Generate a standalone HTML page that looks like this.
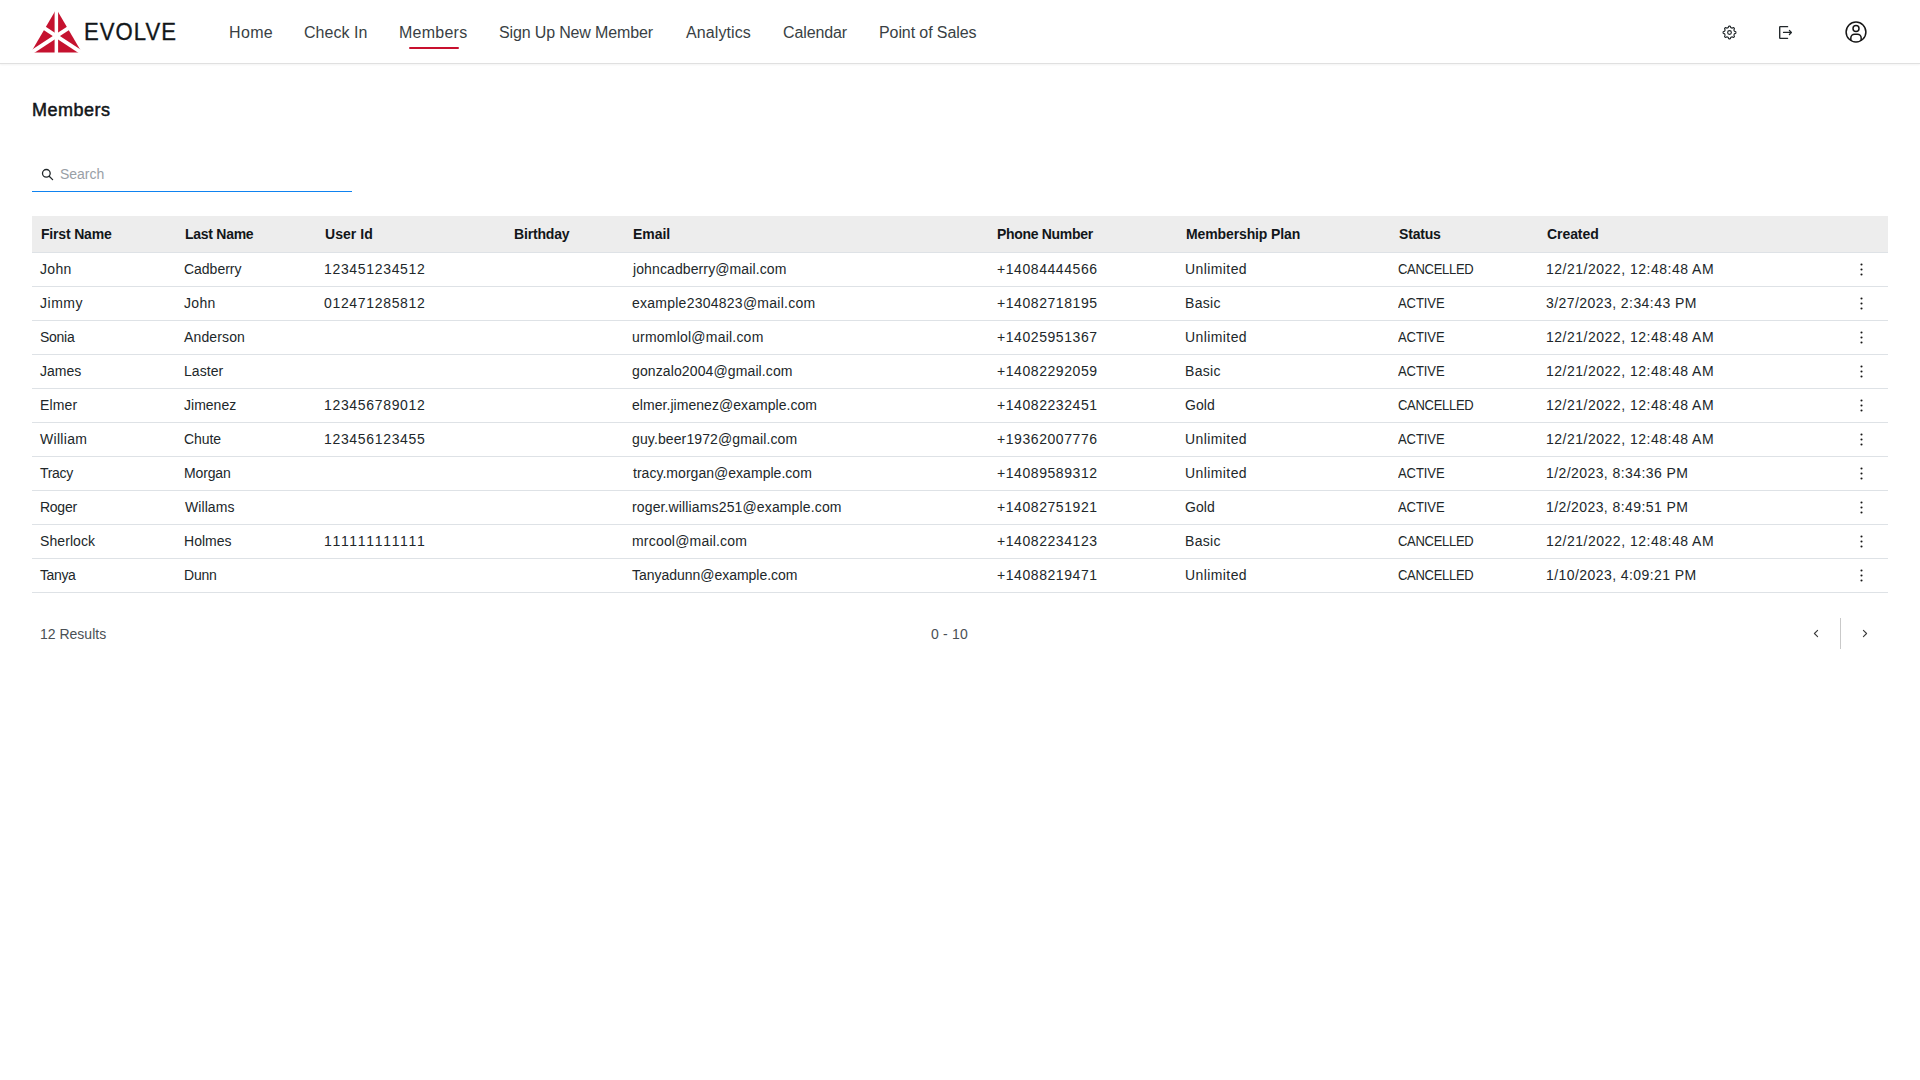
<!DOCTYPE html>
<html lang="en">
<head>
<meta charset="utf-8">
<title>Evolve - Members</title>
<style>
*{box-sizing:border-box;margin:0;padding:0}
html,body{width:1920px;height:1080px;background:#fff;overflow:hidden}
body{font-family:"Liberation Sans",sans-serif;color:#21272a;font-size:14px}
span{display:inline-block;white-space:nowrap}
.nav{position:absolute;left:0;top:0;width:1920px;height:64px;background:#fff;border-bottom:1px solid #e0e0e0;box-shadow:0 1px 2px rgba(0,0,0,.05)}
.logo{position:absolute;left:28px;top:6px;width:60px;height:50px}
.brand{position:absolute;left:84px;top:17px;font-size:24px;line-height:30px;color:#121619;font-weight:400}
.brand span{transform:scaleX(.92);transform-origin:0 50%;-webkit-text-stroke:.35px #121619}
.links a{position:absolute;top:21px;display:block;line-height:24px;font-size:16px;color:#393f44;text-decoration:none;white-space:nowrap}
.links i{position:absolute;left:409px;width:50px;top:47px;height:2px;background:#c8102e;border-radius:1px}
.ico{position:absolute;overflow:visible}
h1{position:absolute;left:32px;top:98px;font-size:18px;line-height:24px;font-weight:400;color:#121619;-webkit-text-stroke:.5px #121619}
.search{position:absolute;left:32px;top:158px;width:320px;height:34px;border-bottom:1px solid #0f83f0}
.search .ph{position:absolute;left:28px;top:6px;line-height:20px;color:#99a0a6;font-size:14px}
table{position:absolute;left:32px;top:216px;width:1856px;border-collapse:collapse;table-layout:fixed}
th{height:36px;background:#ededed;text-align:left;font-weight:700;padding:0 0 0 9px;color:#121619;font-size:14px;white-space:nowrap;border-bottom:1px solid #dee2e6}
td{height:34px;border-bottom:1px solid #dee2e6;padding:0 0 0 8px;color:#21272a;font-size:14px;white-space:nowrap;line-height:20px}
th span,td span{vertical-align:middle}
td span{position:relative;top:-1px}
.n{font-kerning:none}
.u{transform:scaleX(.93);transform-origin:0 50%}
.kb{position:absolute;left:1859px;width:5px;height:15px}
.pg{position:absolute;left:32px;top:618px;width:1856px;height:32px;font-size:14px;color:#4a5055}
.pg .l{position:absolute;left:8px;top:6px;line-height:20px}
.pg .c{position:absolute;left:899px;top:6px;line-height:20px}
.pg .d{position:absolute;left:1808px;top:0;width:1px;height:31px;background:#c9c9c9}
</style>
</head>
<body>
<div class="nav">
<svg class="logo" viewBox="28 6 60 50"><polygon points="56.35,9 30.85,52.6 81.85,52.6" fill="#c5122f"/><g stroke="#fff" fill="none"><path d="M56.35 6V56" stroke-width="3.5"/><path d="M27.2 55.2L73 25.07" stroke-width="3.9"/><path d="M85.5 55.2L39.7 25.07" stroke-width="3.9"/></g></svg>
<div class="brand"><span style="letter-spacing:1.139px;">EVOLVE</span></div>
<div class="links"><a style="left:229px"><span style="letter-spacing:0.336px;">Home</span></a><a style="left:304px"><span style="letter-spacing:0.051px;">Check In</span></a><a style="left:399px"><span style="letter-spacing:0.245px;">Members</span></a><a style="left:499px"><span style="letter-spacing:-0.146px;">Sign Up New Member</span></a><a style="left:685px"><span style="letter-spacing:0.089px;margin-left:1.000px;">Analytics</span></a><a style="left:782px"><span style="letter-spacing:-0.110px;margin-left:1.000px;">Calendar</span></a><a style="left:879px"><span style="letter-spacing:-0.094px;">Point of Sales</span></a><i></i></div>
<svg class="ico" style="left:1721px;top:24px" width="16" height="16" viewBox="1721 24 16 16" fill="none" stroke="#21272a" stroke-width="1.15" stroke-linejoin="round"><path d="M1729.50 26.11 L1729.71 26.12 L1729.92 26.14 L1730.12 26.21 L1730.31 26.35 L1730.47 26.64 L1730.58 27.06 L1730.69 27.41 L1730.81 27.59 L1730.96 27.69 L1731.11 27.76 L1731.26 27.82 L1731.41 27.89 L1731.56 27.95 L1731.71 28.01 L1731.87 28.07 L1732.04 28.10 L1732.26 28.06 L1732.58 27.89 L1732.96 27.67 L1733.28 27.58 L1733.51 27.61 L1733.70 27.71 L1733.87 27.84 L1734.02 27.98 L1734.16 28.13 L1734.29 28.30 L1734.39 28.49 L1734.42 28.72 L1734.33 29.04 L1734.11 29.42 L1733.94 29.74 L1733.90 29.96 L1733.93 30.13 L1733.99 30.29 L1734.05 30.44 L1734.11 30.59 L1734.18 30.74 L1734.24 30.89 L1734.31 31.04 L1734.41 31.19 L1734.59 31.31 L1734.94 31.42 L1735.36 31.53 L1735.65 31.69 L1735.79 31.88 L1735.86 32.08 L1735.88 32.29 L1735.89 32.50 L1735.88 32.71 L1735.86 32.92 L1735.79 33.12 L1735.65 33.31 L1735.36 33.47 L1734.94 33.58 L1734.59 33.69 L1734.41 33.81 L1734.31 33.96 L1734.24 34.11 L1734.18 34.26 L1734.11 34.41 L1734.05 34.56 L1733.99 34.71 L1733.93 34.87 L1733.90 35.04 L1733.94 35.26 L1734.11 35.58 L1734.33 35.96 L1734.42 36.28 L1734.39 36.51 L1734.29 36.70 L1734.16 36.87 L1734.02 37.02 L1733.87 37.16 L1733.70 37.29 L1733.51 37.39 L1733.28 37.42 L1732.96 37.33 L1732.58 37.11 L1732.26 36.94 L1732.04 36.90 L1731.87 36.93 L1731.71 36.99 L1731.56 37.05 L1731.41 37.11 L1731.26 37.18 L1731.11 37.24 L1730.96 37.31 L1730.81 37.41 L1730.69 37.59 L1730.58 37.94 L1730.47 38.36 L1730.31 38.65 L1730.12 38.79 L1729.92 38.86 L1729.71 38.88 L1729.50 38.89 L1729.29 38.88 L1729.08 38.86 L1728.88 38.79 L1728.69 38.65 L1728.53 38.36 L1728.42 37.94 L1728.31 37.59 L1728.19 37.41 L1728.04 37.31 L1727.89 37.24 L1727.74 37.18 L1727.59 37.11 L1727.44 37.05 L1727.29 36.99 L1727.13 36.93 L1726.96 36.90 L1726.74 36.94 L1726.42 37.11 L1726.04 37.33 L1725.72 37.42 L1725.49 37.39 L1725.30 37.29 L1725.13 37.16 L1724.98 37.02 L1724.84 36.87 L1724.71 36.70 L1724.61 36.51 L1724.58 36.28 L1724.67 35.96 L1724.89 35.58 L1725.06 35.26 L1725.10 35.04 L1725.07 34.87 L1725.01 34.71 L1724.95 34.56 L1724.89 34.41 L1724.82 34.26 L1724.76 34.11 L1724.69 33.96 L1724.59 33.81 L1724.41 33.69 L1724.06 33.58 L1723.64 33.47 L1723.35 33.31 L1723.21 33.12 L1723.14 32.92 L1723.12 32.71 L1723.11 32.50 L1723.12 32.29 L1723.14 32.08 L1723.21 31.88 L1723.35 31.69 L1723.64 31.53 L1724.06 31.42 L1724.41 31.31 L1724.59 31.19 L1724.69 31.04 L1724.76 30.89 L1724.82 30.74 L1724.89 30.59 L1724.95 30.44 L1725.01 30.29 L1725.07 30.13 L1725.10 29.96 L1725.06 29.74 L1724.89 29.42 L1724.67 29.04 L1724.58 28.72 L1724.61 28.49 L1724.71 28.30 L1724.84 28.13 L1724.98 27.98 L1725.13 27.84 L1725.30 27.71 L1725.49 27.61 L1725.72 27.58 L1726.04 27.67 L1726.42 27.89 L1726.74 28.06 L1726.96 28.10 L1727.13 28.07 L1727.29 28.01 L1727.44 27.95 L1727.59 27.89 L1727.74 27.82 L1727.89 27.76 L1728.04 27.69 L1728.19 27.59 L1728.31 27.41 L1728.42 27.06 L1728.53 26.64 L1728.69 26.35 L1728.88 26.21 L1729.08 26.14 L1729.29 26.12 L1729.50 26.11Z"/><circle cx="1729.5" cy="32.5" r="1.85"/></svg>
<svg class="ico" style="left:1777px;top:24px" width="16" height="16" viewBox="1777 24 16 16" fill="none" stroke="#21272a" stroke-width="1.35" stroke-linecap="round" stroke-linejoin="round"><path d="M1787.6 26.65H1780.2a.5 .5 0 0 0-.5 .5V37.8a.5 .5 0 0 0 .5 .5H1787.6"/><path d="M1783.5 32.45H1791.2M1789.4 30.4L1791.4 32.45L1789.4 34.5" stroke-width="1.25"/></svg>
<svg class="ico" style="left:1844px;top:20px" width="24" height="24" viewBox="0 0 32 32" fill="none" stroke="#161616" stroke-width="2"><circle cx="16" cy="16" r="13.2"/><circle cx="16" cy="11.2" r="4"/><path d="M9.1 27V24a5 5 0 0 1 5-5h3.8a5 5 0 0 1 5 5V27"/></svg>
</div>
<h1><span style="letter-spacing:0.515px;">Members</span></h1>
<div class="search"><svg class="ico" style="left:9px;top:10px" width="13" height="13" viewBox="41 168 13 13" fill="none" stroke="#21272a" stroke-width="1.3" stroke-linecap="round"><circle cx="46.35" cy="173.35" r="3.85"/><path d="M49.2 176.2L52.6 179.6"/></svg><div class="ph"><span style="letter-spacing:-0.038px;">Search</span></div></div>
<table>
<colgroup><col style="width:144px"><col style="width:140px"><col style="width:189px"><col style="width:119px"><col style="width:364px"><col style="width:189px"><col style="width:212px"><col style="width:149px"><col style="width:282px"><col style="width:68px"></colgroup>
<thead><tr><th><span style="letter-spacing:-0.181px;">First Name</span></th><th><span style="letter-spacing:-0.275px;">Last Name</span></th><th><span style="letter-spacing:0.045px;">User Id</span></th><th><span style="letter-spacing:-0.165px;">Birthday</span></th><th><span style="letter-spacing:-0.029px;">Email</span></th><th><span style="letter-spacing:-0.317px;">Phone Number</span></th><th><span style="letter-spacing:-0.117px;">Membership Plan</span></th><th><span style="letter-spacing:-0.182px;margin-left:1.000px;">Status</span></th><th><span style="letter-spacing:-0.072px;">Created</span></th><th></th></tr></thead>
<tbody>
<tr><td><span style="letter-spacing:0.342px;">John</span></td><td><span style="letter-spacing:-0.022px;">Cadberry</span></td><td><span class="n" style="letter-spacing:0.668px;margin-left:0.000px">123451234512</span></td><td></td><td><span style="letter-spacing:0.109px;margin-left:1.000px;">johncadberry@mail.com</span></td><td><span style="letter-spacing:0.564px;margin-left:1.000px;">+14084444566</span></td><td><span style="letter-spacing:0.413px;">Unlimited</span></td><td><span class="u" style="letter-spacing:-0.330px;margin-left:1.000px;">CANCELLED</span></td><td><span style="letter-spacing:0.506px;">12/21/2022, 12:48:48 AM</span></td><td></td></tr>
<tr><td><span style="letter-spacing:0.513px;">Jimmy</span></td><td><span style="letter-spacing:0.342px;">John</span></td><td><span class="n" style="letter-spacing:0.668px;margin-left:0.000px">012471285812</span></td><td></td><td><span style="letter-spacing:0.249px;">example2304823@mail.com</span></td><td><span style="letter-spacing:0.564px;margin-left:1.000px;">+14082718195</span></td><td><span style="letter-spacing:0.317px;">Basic</span></td><td><span class="u" style="letter-spacing:-0.081px;margin-left:1.000px;">ACTIVE</span></td><td><span style="letter-spacing:0.435px;">3/27/2023, 2:34:43 PM</span></td><td></td></tr>
<tr><td><span style="letter-spacing:-0.274px;">Sonia</span></td><td><span style="letter-spacing:0.128px;">Anderson</span></td><td></td><td></td><td><span style="letter-spacing:0.219px;">urmomlol@mail.com</span></td><td><span style="letter-spacing:0.564px;margin-left:1.000px;">+14025951367</span></td><td><span style="letter-spacing:0.413px;">Unlimited</span></td><td><span class="u" style="letter-spacing:-0.081px;margin-left:1.000px;">ACTIVE</span></td><td><span style="letter-spacing:0.506px;">12/21/2022, 12:48:48 AM</span></td><td></td></tr>
<tr><td><span style="letter-spacing:0.013px;">James</span></td><td><span style="letter-spacing:0.043px;">Laster</span></td><td></td><td></td><td><span style="letter-spacing:0.117px;">gonzalo2004@gmail.com</span></td><td><span style="letter-spacing:0.564px;margin-left:1.000px;">+14082292059</span></td><td><span style="letter-spacing:0.317px;">Basic</span></td><td><span class="u" style="letter-spacing:-0.081px;margin-left:1.000px;">ACTIVE</span></td><td><span style="letter-spacing:0.506px;">12/21/2022, 12:48:48 AM</span></td><td></td></tr>
<tr><td><span style="letter-spacing:0.150px;">Elmer</span></td><td><span style="letter-spacing:0.016px;">Jimenez</span></td><td><span class="n" style="letter-spacing:0.668px;margin-left:0.000px">123456789012</span></td><td></td><td><span style="letter-spacing:0.049px;">elmer.jimenez@example.com</span></td><td><span style="letter-spacing:0.564px;margin-left:1.000px;">+14082232451</span></td><td><span style="letter-spacing:0.045px;">Gold</span></td><td><span class="u" style="letter-spacing:-0.330px;margin-left:1.000px;">CANCELLED</span></td><td><span style="letter-spacing:0.506px;">12/21/2022, 12:48:48 AM</span></td><td></td></tr>
<tr><td><span style="letter-spacing:0.303px;">William</span></td><td><span style="letter-spacing:-0.085px;">Chute</span></td><td><span class="n" style="letter-spacing:0.668px;margin-left:0.000px">123456123455</span></td><td></td><td><span style="letter-spacing:0.118px;">guy.beer1972@gmail.com</span></td><td><span style="letter-spacing:0.564px;margin-left:1.000px;">+19362007776</span></td><td><span style="letter-spacing:0.413px;">Unlimited</span></td><td><span class="u" style="letter-spacing:-0.081px;margin-left:1.000px;">ACTIVE</span></td><td><span style="letter-spacing:0.506px;">12/21/2022, 12:48:48 AM</span></td><td></td></tr>
<tr><td><span style="letter-spacing:-0.286px;">Tracy</span></td><td><span style="letter-spacing:-0.143px;">Morgan</span></td><td></td><td></td><td><span style="letter-spacing:0.031px;margin-left:1.000px;">tracy.morgan@example.com</span></td><td><span style="letter-spacing:0.564px;margin-left:1.000px;">+14089589312</span></td><td><span style="letter-spacing:0.413px;">Unlimited</span></td><td><span class="u" style="letter-spacing:-0.081px;margin-left:1.000px;">ACTIVE</span></td><td><span style="letter-spacing:0.421px;">1/2/2023, 8:34:36 PM</span></td><td></td></tr>
<tr><td><span style="letter-spacing:-0.262px;">Roger</span></td><td><span style="letter-spacing:0.073px;margin-left:1.000px;">Willams</span></td><td></td><td></td><td><span style="letter-spacing:0.137px;">roger.williams251@example.com</span></td><td><span style="letter-spacing:0.564px;margin-left:1.000px;">+14082751921</span></td><td><span style="letter-spacing:0.045px;">Gold</span></td><td><span class="u" style="letter-spacing:-0.081px;margin-left:1.000px;">ACTIVE</span></td><td><span style="letter-spacing:0.421px;">1/2/2023, 8:49:51 PM</span></td><td></td></tr>
<tr><td><span style="letter-spacing:0.087px;">Sherlock</span></td><td><span style="letter-spacing:0.021px;">Holmes</span></td><td><span class="n" style="letter-spacing:0.668px;margin-left:0.000px">111111111111</span></td><td></td><td><span style="letter-spacing:0.192px;">mrcool@mail.com</span></td><td><span style="letter-spacing:0.564px;margin-left:1.000px;">+14082234123</span></td><td><span style="letter-spacing:0.317px;">Basic</span></td><td><span class="u" style="letter-spacing:-0.330px;margin-left:1.000px;">CANCELLED</span></td><td><span style="letter-spacing:0.506px;">12/21/2022, 12:48:48 AM</span></td><td></td></tr>
<tr><td><span style="letter-spacing:-0.380px;">Tanya</span></td><td><span style="letter-spacing:-0.188px;">Dunn</span></td><td></td><td></td><td><span style="letter-spacing:-0.026px;">Tanyadunn@example.com</span></td><td><span style="letter-spacing:0.564px;margin-left:1.000px;">+14088219471</span></td><td><span style="letter-spacing:0.413px;">Unlimited</span></td><td><span class="u" style="letter-spacing:-0.330px;margin-left:1.000px;">CANCELLED</span></td><td><span style="letter-spacing:0.427px;">1/10/2023, 4:09:21 PM</span></td><td></td></tr>
</tbody>
</table>
<svg class="ico kb" style="top:262px" viewBox="0 0 5 15"><g fill="#161616"><circle cx="2.5" cy="2.5" r="1.05"/><circle cx="2.5" cy="7.5" r="1.05"/><circle cx="2.5" cy="12.5" r="1.05"/></g></svg><svg class="ico kb" style="top:296px" viewBox="0 0 5 15"><g fill="#161616"><circle cx="2.5" cy="2.5" r="1.05"/><circle cx="2.5" cy="7.5" r="1.05"/><circle cx="2.5" cy="12.5" r="1.05"/></g></svg><svg class="ico kb" style="top:330px" viewBox="0 0 5 15"><g fill="#161616"><circle cx="2.5" cy="2.5" r="1.05"/><circle cx="2.5" cy="7.5" r="1.05"/><circle cx="2.5" cy="12.5" r="1.05"/></g></svg><svg class="ico kb" style="top:364px" viewBox="0 0 5 15"><g fill="#161616"><circle cx="2.5" cy="2.5" r="1.05"/><circle cx="2.5" cy="7.5" r="1.05"/><circle cx="2.5" cy="12.5" r="1.05"/></g></svg><svg class="ico kb" style="top:398px" viewBox="0 0 5 15"><g fill="#161616"><circle cx="2.5" cy="2.5" r="1.05"/><circle cx="2.5" cy="7.5" r="1.05"/><circle cx="2.5" cy="12.5" r="1.05"/></g></svg><svg class="ico kb" style="top:432px" viewBox="0 0 5 15"><g fill="#161616"><circle cx="2.5" cy="2.5" r="1.05"/><circle cx="2.5" cy="7.5" r="1.05"/><circle cx="2.5" cy="12.5" r="1.05"/></g></svg><svg class="ico kb" style="top:466px" viewBox="0 0 5 15"><g fill="#161616"><circle cx="2.5" cy="2.5" r="1.05"/><circle cx="2.5" cy="7.5" r="1.05"/><circle cx="2.5" cy="12.5" r="1.05"/></g></svg><svg class="ico kb" style="top:500px" viewBox="0 0 5 15"><g fill="#161616"><circle cx="2.5" cy="2.5" r="1.05"/><circle cx="2.5" cy="7.5" r="1.05"/><circle cx="2.5" cy="12.5" r="1.05"/></g></svg><svg class="ico kb" style="top:534px" viewBox="0 0 5 15"><g fill="#161616"><circle cx="2.5" cy="2.5" r="1.05"/><circle cx="2.5" cy="7.5" r="1.05"/><circle cx="2.5" cy="12.5" r="1.05"/></g></svg><svg class="ico kb" style="top:568px" viewBox="0 0 5 15"><g fill="#161616"><circle cx="2.5" cy="2.5" r="1.05"/><circle cx="2.5" cy="7.5" r="1.05"/><circle cx="2.5" cy="12.5" r="1.05"/></g></svg>
<div class="pg"><div class="l"><span style="letter-spacing:-0.002px;">12 Results</span></div><div class="c"><span style="letter-spacing:0.218px;">0 - 10</span></div><span class="d"></span><svg class="ico" style="left:1776px;top:8px" width="16" height="16" viewBox="1808 626 16 16" fill="none" stroke="#393939" stroke-width="1.1" stroke-linecap="round" stroke-linejoin="round"><path d="M1817.6 630.3L1814.4 633.5L1817.6 636.7"/></svg><svg class="ico" style="left:1825px;top:8px" width="16" height="16" viewBox="1857 626 16 16" fill="none" stroke="#393939" stroke-width="1.1" stroke-linecap="round" stroke-linejoin="round"><path d="M1863.4 630.3L1866.6 633.5L1863.4 636.7"/></svg></div>
</body>
</html>
